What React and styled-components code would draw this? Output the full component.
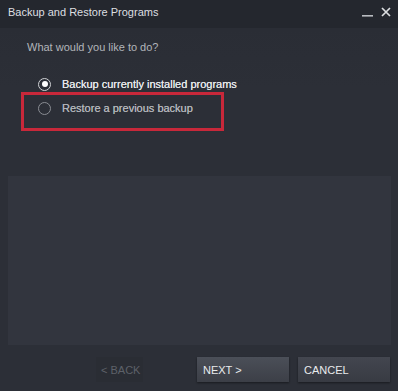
import styled, { createGlobalStyle } from "styled-components";

const GlobalStyle = createGlobalStyle`
  html, body {
    margin: 0;
    padding: 0;
    background: #2c2f37;
  }
  body {
    font-family: "Liberation Sans", Arial, sans-serif;
  }
`;

const App = () => {
  return (
    <>
      <GlobalStyle />
      <Window>
        <TitleBar>
          <Title>Backup and Restore Programs</Title>
          <WindowControls>
            <ControlBtn aria-label="minimize">
              <svg width="11" height="10" viewBox="0 0 11 10">
                <rect x="0" y="8" width="11" height="1.6" fill="#b9bcc1" />
              </svg>
            </ControlBtn>
            <ControlBtn aria-label="close">
              <svg width="10" height="10" viewBox="0 0 10 10">
                <path d="M1 1 L9 9 M9 1 L1 9" stroke="#dcdee1" strokeWidth="1.7" />
              </svg>
            </ControlBtn>
          </WindowControls>
        </TitleBar>

        <Body>
          <Question>What would you like to do?</Question>
          <Options>
            <Option>
              <Radio checked />
              <OptionLabel checked>Backup currently installed programs</OptionLabel>
            </Option>
            <Option>
              <Radio />
              <OptionLabel>Restore a previous backup</OptionLabel>
              <Highlight />
            </Option>
          </Options>
        </Body>

        <Panel />

        <Footer>
          <Button disabled>&lt; BACK</Button>
          <Button primary>NEXT &gt;</Button>
          <Button>CANCEL</Button>
        </Footer>
      </Window>
    </>
  );
};

export default App;

const Window = styled.div`
  width: 398px;
  height: 391px;
  display: flex;
  flex-direction: column;
  background: #2c2f37;
  overflow: hidden;
`;

const TitleBar = styled.div`
  height: 28px;
  display: flex;
  align-items: center;
  justify-content: space-between;
  padding: 0 7px 4px 8px;
  background: #24272e;
  box-sizing: border-box;
`;

const Title = styled.span`
  color: #dddfe1;
  font-size: 11px;
`;

const WindowControls = styled.div`
  display: flex;
  gap: 8px;
  align-items: center;
`;

const ControlBtn = styled.span`
  display: flex;
`;

const Body = styled.div`
  height: 148px;
  padding: 13px 0 0 27px;
  box-sizing: border-box;
  background: linear-gradient(#2a2d35, #2c2f37 40%);
`;

const Question = styled.div`
  color: #b2b5ba;
  font-size: 11px;
  line-height: 13px;
  margin-bottom: 18px;
`;

const Options = styled.div`
  display: flex;
  flex-direction: column;
  margin-left: 11px;
`;

const Option = styled.div`
  position: relative;
  display: flex;
  align-items: center;
  gap: 11px;
  height: 24px;
`;

const Radio = styled.span`
  flex: none;
  width: 13px;
  height: 13px;
  border-radius: 50%;
  border: 1.5px solid ${(p) => (p.checked ? "#cfd1d4" : "#8a8d93")};
  box-sizing: border-box;
  display: flex;
  align-items: center;
  justify-content: center;
  &::after {
    content: "";
    width: 6px;
    height: 6px;
    border-radius: 50%;
    background: ${(p) => (p.checked ? "#ffffff" : "transparent")};
  }
`;

const OptionLabel = styled.span`
  font-size: 11px;
  white-space: nowrap;
  color: ${(p) => (p.checked ? "#e6e8ea" : "#b0b3b8")};
  text-shadow: 0 0 0.4px currentColor;
`;

const Highlight = styled.span`
  position: absolute;
  left: -17px;
  top: -4px;
  width: 203px;
  height: 39px;
  box-sizing: border-box;
  border: 3px solid #c8283a;
  pointer-events: none;
`;

const Panel = styled.div`
  margin: 0 7px 0 8px;
  height: 169px;
  background: #32353e;
`;

const Footer = styled.div`
  display: flex;
  justify-content: flex-end;
  gap: 9px;
  padding: 12px 8px 0 0;
`;

const Button = styled.div`
  width: ${(p) => (p.disabled ? "47px" : "92px")};
  height: 25px;
  box-sizing: border-box;
  padding-left: ${(p) => (p.disabled ? "5px" : "6px")};
  display: flex;
  align-items: center;
  font-size: 11px;
  color: ${(p) => (p.disabled ? "#5d6169" : "#e9ebed")};
  background: ${(p) =>
    p.disabled
      ? "#2a2d34"
      : p.primary
      ? "linear-gradient(#4b4f58, #3c3f47)"
      : "linear-gradient(#43464f, #383b43)"};
  box-shadow: ${(p) => (p.disabled ? "none" : "0 1px 2px rgba(0,0,0,0.45)")};
  margin-right: ${(p) => (p.disabled ? "45px" : "0")};
`;
